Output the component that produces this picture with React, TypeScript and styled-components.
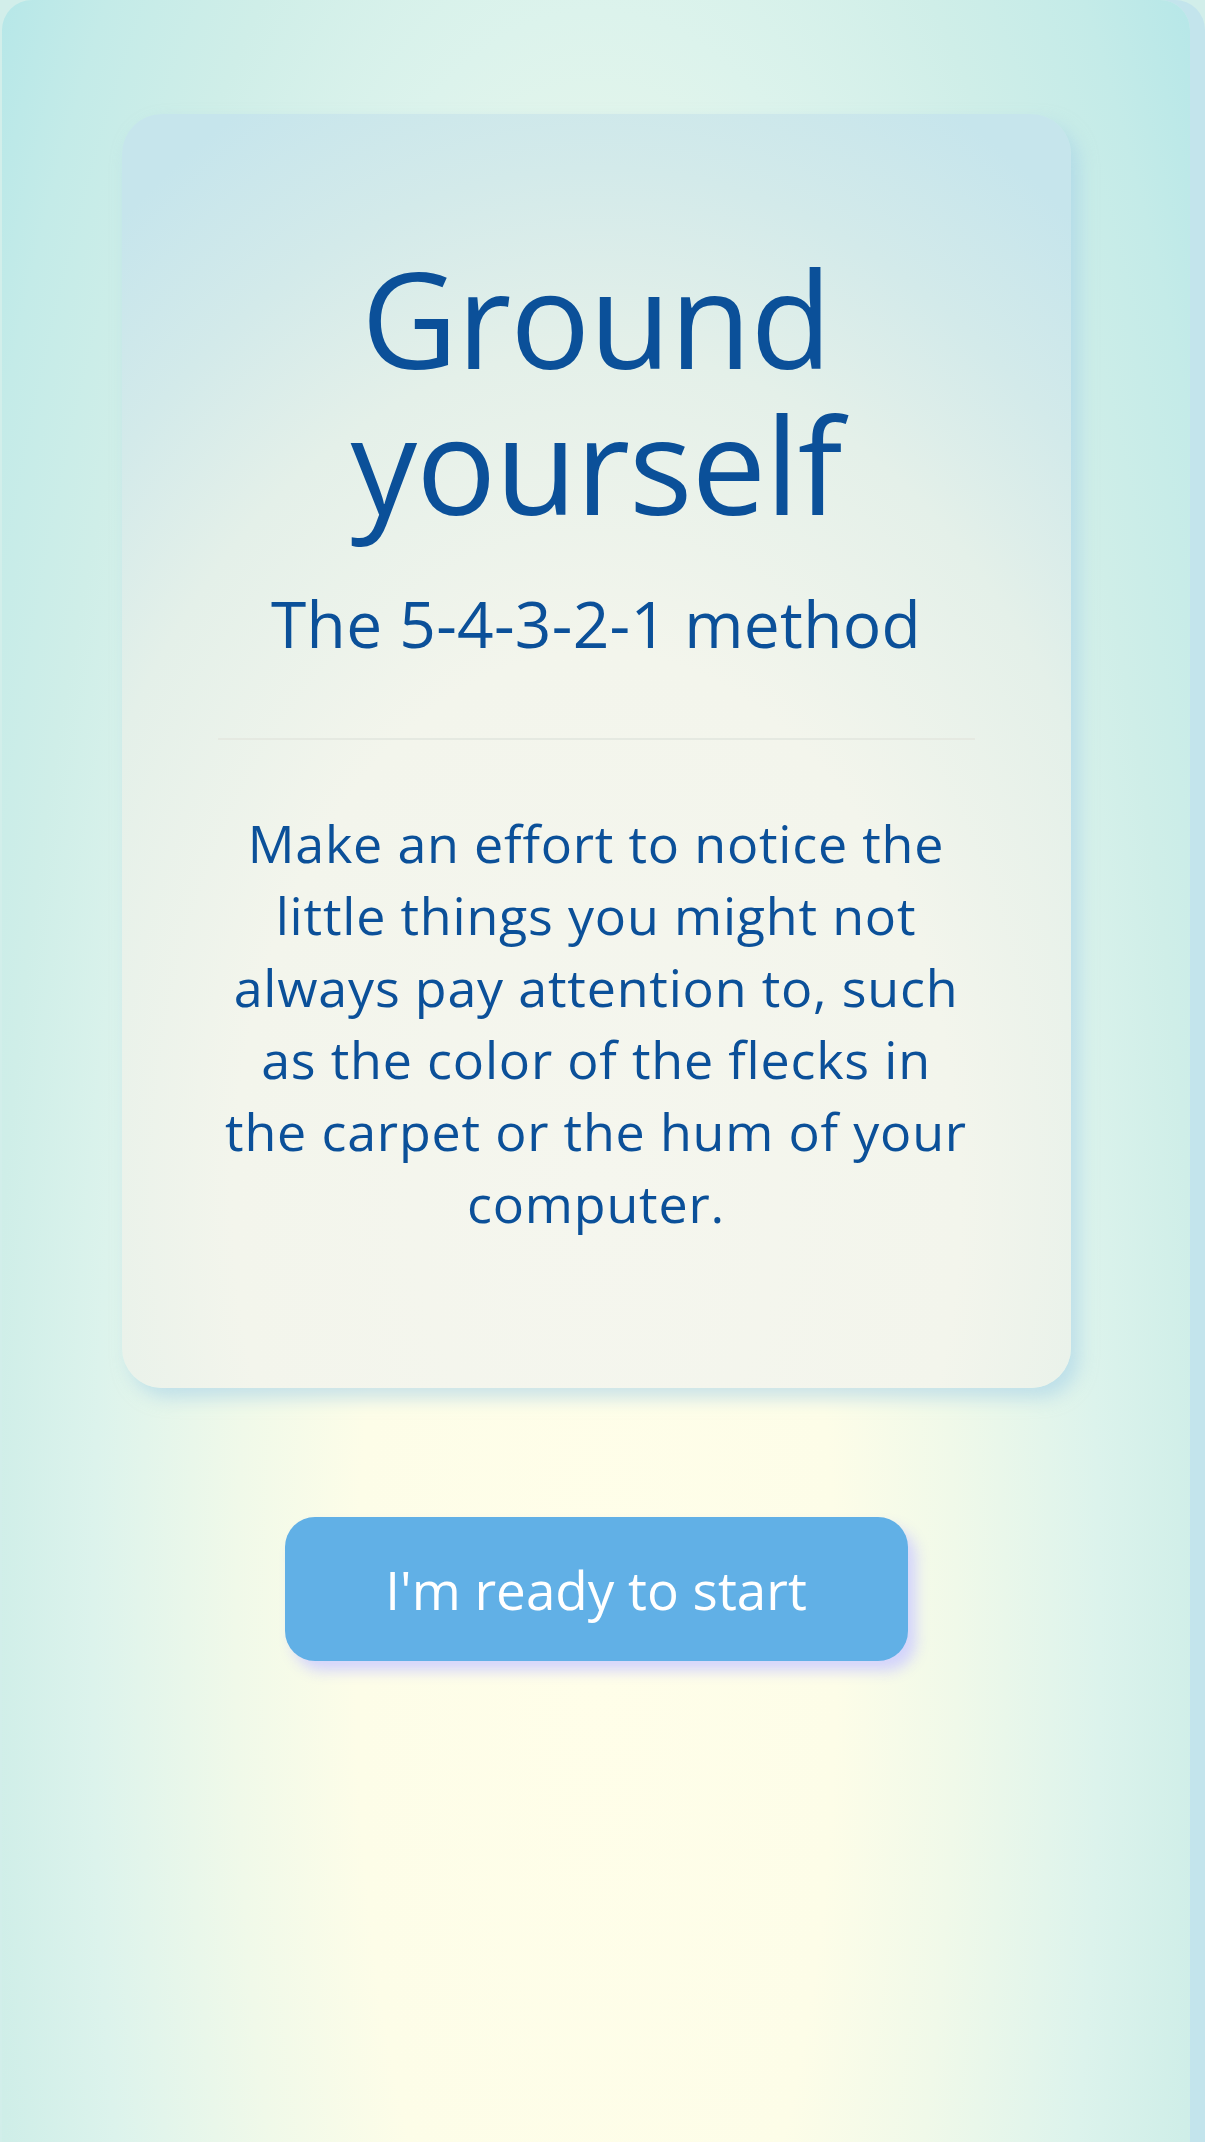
import React from "react";
import styled, { createGlobalStyle } from "styled-components";

const GlobalStyle = createGlobalStyle`
  html, body {
    margin: 0;
    padding: 0;
  }
  body {
    background: #d2eeea;
    font-family: "Open Sans", "Liberation Sans", sans-serif;
  }
`;

const Frame = styled.div`
  margin-left: 2px;
  width: 1188px;
  min-height: 2142px;
  box-sizing: border-box;
  border-radius: 30px 30px 0 0;
  background: radial-gradient(
    ellipse 800px 2600px at 50% 1650px,
    #fffee9 0%,
    #fdfde8 30%,
    #f0f9e9 45%,
    #dcf3ec 63%,
    #cfeee8 76%,
    #c4ebe8 88%,
    #b6e7e8 98%
  );
  box-shadow: 15px 0 0 #c3e4ec;
  display: flex;
  flex-direction: column;
  align-items: center;
  padding-top: 114px;
`;

const Card = styled.section`
  width: 949px;
  box-sizing: border-box;
  padding: 131px 96px 149px;
  border-radius: 40px;
  background: radial-gradient(
    ellipse 85% 95% at 50% 85%,
    #f5f6ee 0%,
    #f3f5ec 45%,
    #e4f0e9 70%,
    #d3eaea 85%,
    #c6e5ec 100%
  );
  box-shadow: 8px 10px 18px rgba(160, 205, 232, 0.55);
  display: flex;
  flex-direction: column;
  align-items: center;
  text-align: center;
  color: #0b5099;
`;

const Title = styled.h1`
  margin: 0;
  font-size: 133px;
  line-height: 146px;
  font-weight: 500;
  letter-spacing: -1px;
`;

const Subtitle = styled.h2`
  margin: 47px 0 0;
  font-size: 64px;
  line-height: 80px;
  font-weight: 500;
  letter-spacing: 0.3px;
`;

const Divider = styled.hr`
  align-self: stretch;
  margin: 74px 0 0;
  border: none;
  height: 2px;
  background: #e5e9e1;
`;

const Body = styled.p`
  margin: 67px 0 0;
  font-size: 52px;
  line-height: 72px;
  font-weight: 500;
  letter-spacing: 0.8px;
  white-space: nowrap;
`;

const StartButton = styled.button`
  margin-top: 129px;
  width: 623px;
  height: 144px;
  border: none;
  border-radius: 30px;
  background: #61b0e6;
  color: #ffffff;
  font-family: "Open Sans", "Liberation Sans", sans-serif;
  font-size: 53px;
  font-weight: 500;
  box-shadow: 8px 10px 14px rgba(205, 205, 255, 0.85);
  display: flex;
  align-items: center;
  justify-content: center;
  cursor: pointer;
`;

export default function App() {
  return (
    <>
      <GlobalStyle />
      <Frame>
        <Card>
          <Title>
            Ground
            <br />
            yourself
          </Title>
          <Subtitle>The 5-4-3-2-1 method</Subtitle>
          <Divider />
          <Body>
            Make an effort to notice the
            <br />
            little things you might not
            <br />
            always pay attention to, such
            <br />
            as the color of the flecks in
            <br />
            the carpet or the hum of your
            <br />
            computer.
          </Body>
        </Card>
        <StartButton>I'm ready to start</StartButton>
      </Frame>
    </>
  );
}
